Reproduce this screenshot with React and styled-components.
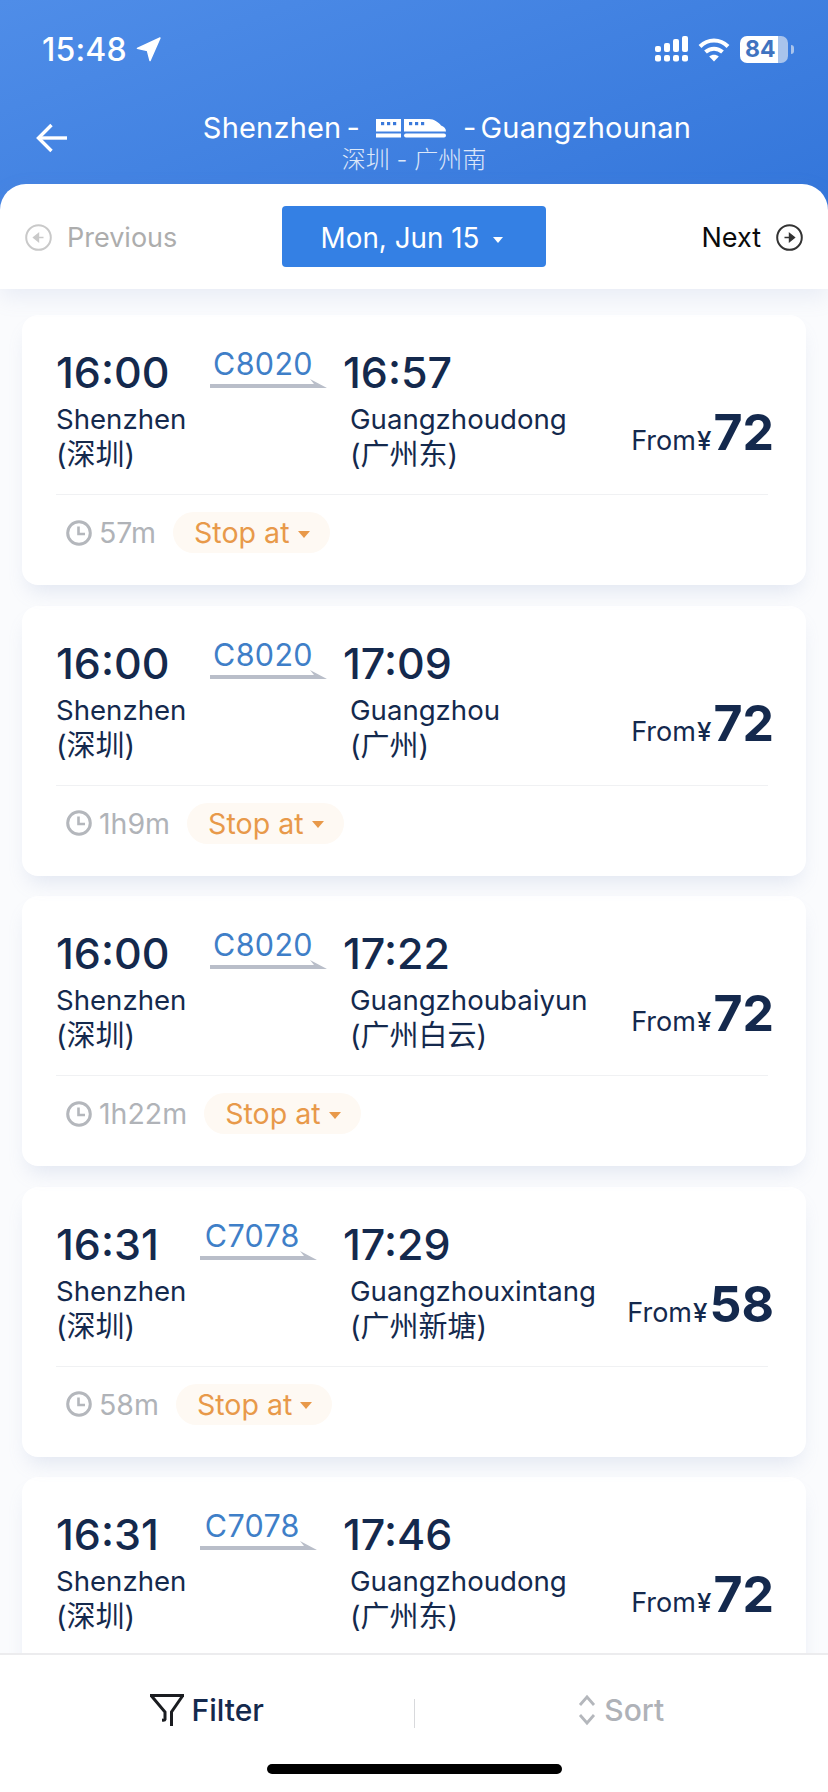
import styled, { createGlobalStyle } from 'styled-components';

const GlobalStyle = createGlobalStyle`
  html, body {
    margin: 0;
    padding: 0;
    background: #fafbfd;
  }
  * {
    box-sizing: border-box;
  }
`;

const FONT = `Inter, "Noto Sans CJK SC", sans-serif`;
const NAVY = '#14294d';

const Screen = styled.div`
  width: 828px;
  height: 1792px;
  display: flex;
  flex-direction: column;
  overflow: hidden;
  background: #fafbfd;
  font-family: ${FONT};
`;

const Top = styled.header`
  position: relative;
  z-index: 10;
  flex: none;
  background: linear-gradient(160deg, #4f8de8 0%, #2f72d8 100%);
  color: #fff;
`;

const StatusBar = styled.div`
  height: 98px;
  padding: 30px 40px 0 42px;
  display: flex;
  align-items: flex-start;
  justify-content: space-between;
`;

const Clock = styled.div`
  display: flex;
  align-items: center;
  gap: 9px;
  height: 38px;
  font-size: 32px;
  font-weight: 500;
  letter-spacing: 0.2px;
`;

const StatusIcons = styled.div`
  display: flex;
  align-items: center;
  gap: 10px;
  height: 38px;
`;

const Battery = styled.div`
  position: relative;
  width: 48px;
  height: 27px;
  border-radius: 7px;
  background: linear-gradient(90deg, #fff 0 80%, #a9c4ec 80% 100%);
  color: #3f73c0;
  font-size: 23px;
  font-weight: 700;
  line-height: 27px;
  padding-left: 5px;

  &::after {
    content: '';
    position: absolute;
    top: 9px;
    right: -6px;
    width: 3px;
    height: 9px;
    border-radius: 0 3px 3px 0;
    background: #a9c4ec;
  }
`;

const NavRow = styled.div`
  display: grid;
  grid-template-columns: 67px 1fr 67px;
  height: 86px;
  align-items: start;
`;

const BackButton = styled.div`
  padding: 25px 0 0 36px;
  height: 60px;
`;

const TitleBlock = styled.div`
  display: flex;
  flex-direction: column;
  align-items: center;
`;

const Title = styled.div`
  display: flex;
  align-items: center;
  height: 60px;
  margin-left: 66px;
  font-size: 29px;
  line-height: 60px;
  letter-spacing: 0.2px;
  white-space: nowrap;
`;

const Dash = styled.span`
  margin: 0 ${(p) => p.$right}px 0 ${(p) => p.$left}px;
`;

const Subtitle = styled.div`
  margin-top: -13px;
  font-size: 24px;
  line-height: 30px;
  font-weight: 300;
  opacity: 0.82;
  white-space: nowrap;
`;

const DateBar = styled.div`
  height: 105px;
  display: grid;
  grid-template-columns: 1fr 264px 1fr;
  align-items: center;
  padding: 0 25px;
  background: #fff;
  border-radius: 26px 26px 0 0;
  box-shadow: 0 8px 22px rgba(130, 150, 195, 0.14);
  font-size: 27px;
`;

const DayLink = styled.div`
  display: flex;
  align-items: center;
  gap: ${(p) => p.$gap}px;
  padding-top: 1px;
  justify-content: ${(p) => (p.$next ? 'flex-end' : 'flex-start')};
  color: ${(p) => (p.$next ? '#0b0b0b' : '#adadad')};
`;

const DateButton = styled.div`
  height: 61px;
  padding: 2px 4px 0 0;
  display: flex;
  align-items: center;
  justify-content: center;
  gap: 14px;
  border-radius: 4px;
  background: #3480e4;
  color: #fff;
  font-size: 27.8px;
`;

const Caret = styled.span`
  width: 0;
  height: 0;
  margin-top: ${(p) => p.$top || 4}px;
  border-left: ${(p) => p.$size || 5.5}px solid transparent;
  border-right: ${(p) => p.$size || 5.5}px solid transparent;
  border-top: ${(p) => (p.$size ? p.$size + 0.5 : 6)}px solid currentColor;
`;

const List = styled.main`
  flex: 1;
  min-height: 0;
  overflow: hidden;
  display: flex;
  flex-direction: column;
  gap: 20.6px;
  padding: 26px 22px 0;
`;

// earlier cards stack above later ones so each shadow falls on the next card
const Card = styled.article`
  position: relative;
  z-index: ${(p) => p.$stack};
  flex: none;
  height: 270px;
  padding: 32px 34px 0;
  border-radius: 16px;
  background: #fff;
  box-shadow: 0 12px 20px -6px rgba(130, 150, 195, 0.2);
`;

const Route = styled.div`
  display: flex;
  height: 148px;
  border-bottom: 1px solid #f0f1f3;
  margin-right: 4px;
`;

const Depart = styled.div`
  width: 287px;
  flex: none;
`;

const TimeRow = styled.div`
  display: flex;
  align-items: flex-start;
`;

const Time = styled.div`
  font-size: 43px;
  line-height: 50px;
  font-weight: 500;
  color: ${NAVY};
`;

const Train = styled.div`
  width: 117px;
  margin-left: 41px;
  display: flex;
  flex-direction: column;
  align-items: center;
`;

const TrainCode = styled.div`
  margin-top: 1px;
  margin-right: 12px;
  font-size: 30.5px;
  line-height: 31px;
  color: #3f7fc8;
  letter-spacing: 0.3px;
`;

const StationBlock = styled.div`
  margin-top: 4px;
  padding-left: ${(p) => p.$indent || 0}px;
`;

const Station = styled.div`
  font-size: 27.6px;
  line-height: 36px;
  color: ${NAVY};
  white-space: nowrap;
`;

const StationCn = styled(Station)`
  font-size: 29px;
`;

const Arrive = styled.div`
  flex: 1;
`;

const Price = styled.div`
  flex: none;
  align-self: flex-start;
  margin-top: 55px;
  margin-right: -6px;
  display: flex;
  align-items: baseline;
  color: ${NAVY};
`;

const FromLabel = styled.span`
  font-size: 27px;
`;

const Yen = styled.span`
  font-size: 26px;
  font-weight: 500;
  margin: 0 2px 0 1px;
`;

const Amount = styled.span`
  font-size: 50px;
  line-height: 60px;
  font-weight: 700;
`;

const Details = styled.div`
  display: flex;
  align-items: center;
  padding: 17px 0 0 10px;
`;

const Duration = styled.div`
  display: flex;
  align-items: center;
  gap: 7px;
  font-size: 28.5px;
  color: #b0b3b8;
`;

const StopPill = styled.div`
  height: 41px;
  margin-left: 17px;
  padding: 0 20px 0 21px;
  display: flex;
  align-items: center;
  gap: 8px;
  border-radius: 21px;
  background: #fef9f3;
  color: #e8994a;
  font-size: 28.6px;
`;

const BottomBar = styled.footer`
  position: relative;
  z-index: 10;
  flex: none;
  height: 139px;
  padding-top: 37px;
  display: flex;
  flex-direction: column;
  background: #fff;
  border-top: 2px solid #ececee;
`;

const Actions = styled.div`
  display: grid;
  grid-template-columns: 1fr 1px 1fr;
  align-items: center;
  height: 36px;
`;

const Action = styled.div`
  display: flex;
  align-items: center;
  justify-content: center;
  gap: ${(p) => p.$gap}px;
  font-size: 30px;
  font-weight: 500;
  color: ${(p) => (p.$muted ? '#afb2b8' : NAVY)};
`;

const Divider = styled.div`
  height: 29px;
  margin-top: 6px;
  background: #d8d9dc;
`;

const HomeIndicator = styled.div`
  width: 295px;
  height: 10px;
  margin: 36px auto 0;
  border-radius: 5px;
  background: #000;
`;

function LocationArrow() {
  return (
    <svg width="25" height="25" viewBox="0 0 25 25" fill="#fff" stroke="#fff" strokeWidth="1.4" strokeLinejoin="round">
      <path d="M24 1 14 23.6 11.4 13.6 1.4 11.4z" />
    </svg>
  );
}

function SignalIcon() {
  const bars = [
    { x: 0, y: 10 },
    { x: 9, y: 7 },
    { x: 18, y: 3 },
    { x: 27, y: 0 },
  ];
  return (
    <svg width="33" height="26" viewBox="0 0 33 26" fill="#fff">
      {bars.map((b) => (
        <g key={b.x}>
          <rect x={b.x} y={b.y} width="6" height={16 - b.y} rx="2" />
          <rect x={b.x} y="19" width="6" height="6.5" rx="2" />
        </g>
      ))}
    </svg>
  );
}

function WifiIcon() {
  return (
    <svg width="32" height="25" viewBox="0 0 32 25" fill="none" stroke="#fff" strokeWidth="4">
      <path d="M2 9.5C10 1.5 22 1.5 30 9.5" />
      <path d="M7.5 15C12.5 10.5 19.5 10.5 24.5 15" />
      <path d="M16 24.5 11.2 19.6C14 17.2 18 17.2 20.8 19.6Z" fill="#fff" stroke="none" />
    </svg>
  );
}

function BackArrow() {
  return (
    <svg width="32" height="30" viewBox="0 0 32 30" fill="none" stroke="#fff" strokeWidth="3.4">
      <path d="M31 15H3" />
      <path d="M15.5 2 2.5 15l13 13" />
    </svg>
  );
}

function TrainIcon() {
  return (
    <svg width="70" height="20" viewBox="0 0 70 20" fill="#fff">
      <path d="M0 1h25v12.5H0zM28 1h25c5 0 10 3.5 12 6.5 3 1 5 3 5 6H28z" />
      <rect x="0" y="15.5" width="25" height="4" />
      <rect x="28" y="15.5" width="42" height="4" rx="2" />
      <g fill="#3a79db">
        <rect x="5" y="4" width="3.2" height="3.2" />
        <rect x="11" y="4" width="3.2" height="3.2" />
        <rect x="17" y="4" width="3.2" height="3.2" />
        <rect x="33" y="4" width="3.2" height="3.2" />
        <rect x="39" y="4" width="3.2" height="3.2" />
        <rect x="45" y="4" width="3.2" height="3.2" />
      </g>
    </svg>
  );
}

function RoundArrow({ dir, color }) {
  return (
    <svg width="27" height="27" viewBox="0 0 27 27" fill="none" stroke={color} strokeWidth="2">
      <circle cx="13.5" cy="13.5" r="12.3" />
      {dir === 'left' ? (
        <path d="M18.5 13.5H11M13.5 9.5l-5 4 5 4Z" fill={color} strokeWidth="1.4" />
      ) : (
        <path d="M8.5 13.5H16M13.5 9.5l5 4-5 4Z" fill={color} strokeWidth="1.4" />
      )}
    </svg>
  );
}

function RailArrow() {
  return (
    <svg width="117" height="9" viewBox="0 0 117 9" fill="#b9bec9">
      <path d="M0 5h104L100 0l17 9H0z" />
    </svg>
  );
}

function ClockIcon() {
  return (
    <svg width="26" height="26" viewBox="0 0 26 26" fill="none" stroke="#b4b7bc" strokeWidth="3">
      <circle cx="13" cy="13" r="11.3" />
      <path d="M12.5 6.5v7.5h6.5" strokeWidth="2.6" />
    </svg>
  );
}

function FilterIcon() {
  return (
    <svg width="34" height="34" viewBox="0 0 34 34" fill="none" stroke="#1a1c20" strokeWidth="3">
      <path d="M0 2.5h34" />
      <path d="M2 3 21.5 3" strokeWidth="2" />
      <path d="M1.5 3 15 19v7.5c-.2 1-2 .6-3 .6" />
      <path d="M32.5 3 21.5 19v14" />
    </svg>
  );
}

function SortIcon() {
  return (
    <svg width="18" height="32" viewBox="0 0 18 32" fill="none" stroke="#b4b7bc" strokeWidth="2.8">
      <path d="M2 11 9 3l7 8" />
      <path d="M2 21l7 8 7-8" />
    </svg>
  );
}

const TRIPS = [
  { depart: '16:00', code: 'C8020', arrive: '16:57', station: 'Guangzhoudong', cn: '广州东', price: 72, duration: '57m' },
  { depart: '16:00', code: 'C8020', arrive: '17:09', station: 'Guangzhou', cn: '广州', price: 72, duration: '1h9m' },
  { depart: '16:00', code: 'C8020', arrive: '17:22', station: 'Guangzhoubaiyun', cn: '广州白云', price: 72, duration: '1h22m' },
  { depart: '16:31', code: 'C7078', arrive: '17:29', station: 'Guangzhouxintang', cn: '广州新塘', price: 58, duration: '58m' },
  { depart: '16:31', code: 'C7078', arrive: '17:46', station: 'Guangzhoudong', cn: '广州东', price: 72 },
];

function TripCard({ trip, stack }) {
  return (
    <Card $stack={stack}>
      <Route>
        <Depart>
          <TimeRow>
            <Time>{trip.depart}</Time>
            <Train>
              <TrainCode>{trip.code}</TrainCode>
              <RailArrow />
            </Train>
          </TimeRow>
          <StationBlock>
            <Station>Shenzhen</Station>
            <StationCn>(深圳)</StationCn>
          </StationBlock>
        </Depart>
        <Arrive>
          <Time>{trip.arrive}</Time>
          <StationBlock $indent={7}>
            <Station>{trip.station}</Station>
            <StationCn>({trip.cn})</StationCn>
          </StationBlock>
        </Arrive>
        <Price>
          <FromLabel>From</FromLabel>
          <Yen>¥</Yen>
          <Amount>{trip.price}</Amount>
        </Price>
      </Route>
      {trip.duration && (
        <Details>
          <Duration>
            <ClockIcon />
            {trip.duration}
          </Duration>
          <StopPill>
            Stop at
            <Caret $top={3} $size={6.5} />
          </StopPill>
        </Details>
      )}
    </Card>
  );
}

function App() {
  return (
    <Screen>
      <GlobalStyle />
      <Top>
        <StatusBar>
          <Clock>
            15:48
            <LocationArrow />
          </Clock>
          <StatusIcons>
            <SignalIcon />
            <WifiIcon />
            <Battery>84</Battery>
          </StatusIcons>
        </StatusBar>
        <NavRow>
          <BackButton>
            <BackArrow />
          </BackButton>
          <TitleBlock>
            <Title>
              Shenzhen
              <Dash $left={5} $right={16}>-</Dash>
              <TrainIcon />
              <Dash $left={17} $right={4}>-</Dash>
              Guangzhounan
            </Title>
            <Subtitle>深圳 - 广州南</Subtitle>
          </TitleBlock>
        </NavRow>
        <DateBar>
          <DayLink $gap={15}>
            <RoundArrow dir="left" color="#c9c9c9" />
            Previous
          </DayLink>
          <DateButton>
            Mon, Jun 15
            <Caret />
          </DateButton>
          <DayLink $next $gap={15}>
            Next
            <RoundArrow dir="right" color="#333" />
          </DayLink>
        </DateBar>
      </Top>
      <List>
        {TRIPS.map((trip, i) => (
          <TripCard key={trip.depart + trip.arrive} trip={trip} stack={TRIPS.length - i} />
        ))}
      </List>
      <BottomBar>
        <Actions>
          <Action $gap={8}>
            <FilterIcon />
            Filter
          </Action>
          <Divider />
          <Action $muted $gap={8}>
            <SortIcon />
            Sort
          </Action>
        </Actions>
        <HomeIndicator />
      </BottomBar>
    </Screen>
  );
}

export default App;
